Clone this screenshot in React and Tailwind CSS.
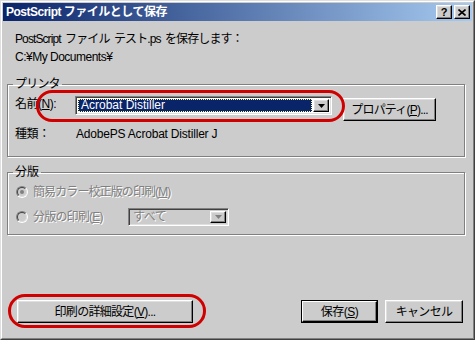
import React from "react";

const font = { fontFamily: '"Liberation Sans", "Noto Sans CJK JP", sans-serif' };

const raised =
  "border border-t-white border-l-white border-r-black border-b-black shadow-[inset_-1px_-1px_0_#808080,inset_1px_1px_0_#dfdfdf] bg-[#cccccc]";
const sunken =
  "border border-t-[#808080] border-l-[#808080] border-r-white border-b-white shadow-[inset_1px_1px_0_#404040,inset_-1px_-1px_0_#dfdfdf]";

function Arrow({ color = "#000" }) {
  return (
    <svg width="7" height="4" viewBox="0 0 7 4">
      <path d="M0 0h7L3.5 4z" fill={color} />
    </svg>
  );
}

function DropBtn({ disabled }) {
  return (
    <div className={`w-[16px] h-full flex items-center justify-center ${raised}`}>
      <Arrow color={disabled ? "#808080" : "#000"} />
    </div>
  );
}

function Radio({ checked }) {
  return (
    <div className="w-[12px] h-[12px] rounded-full border border-t-[#808080] border-l-[#808080] border-r-white border-b-white bg-[#cccccc] flex items-center justify-center shrink-0">
      <div className="w-[10px] h-[10px] rounded-full border border-t-[#404040] border-l-[#404040] border-r-[#dfdfdf] border-b-[#dfdfdf] flex items-center justify-center">
        {checked && <div className="w-[4px] h-[4px] rounded-full bg-[#808080]" />}
      </div>
    </div>
  );
}

const dis = "text-[#808080] [text-shadow:1px_1px_0_#fff]";

export default function App() {
  return (
    <div
      className="relative w-[475px] h-[340px] bg-[#cccccc] border border-t-[#dfdfdf] border-l-[#dfdfdf] border-r-[#404040] border-b-[#404040] text-[12px] leading-[14px] text-black"
      style={font}
    >
      <div className="h-full border border-t-white border-l-white border-r-[#808080] border-b-[#808080] p-[1px] flex flex-col">
        {/* title bar */}
        <div className="h-[18px] flex items-center bg-[linear-gradient(to_right,#0a246a,#a6caf0)] pl-[3px] pr-[2px]">
          <div className="flex-1 text-white font-bold text-[12px] tracking-[-0.5px]">
            PostScript ファイルとして保存
          </div>
          <div className={`w-[16px] h-[14px] flex items-center justify-center font-bold text-[11px] leading-none ${raised}`}>?</div>
          <div className={`ml-[2px] w-[16px] h-[14px] flex items-center justify-center ${raised}`}>
            <svg width="8" height="7" viewBox="0 0 8 7">
              <path d="M0.5 0.5l7 6M7.5 0.5l-7 6" stroke="#000" strokeWidth="1.6" />
            </svg>
          </div>
        </div>

        {/* content */}
        <div className="flex flex-col px-[4px]">
          <div className="ml-[8px] mt-[11px] tracking-[-0.9px] [word-spacing:2px]">PostScript ファイル テスト.ps を保存します：</div>
          <div className="ml-[8px] mt-[4px] tracking-[-0.5px]">C:¥My Documents¥</div>

          <fieldset className="mt-[13px] w-[458px] border border-[#808080] shadow-[inset_1px_1px_0_#fff,1px_1px_0_#fff] pb-[15px]">
            <legend className="ml-[5px] px-[2px] tracking-[-0.8px]">プリンタ</legend>
            <div className="flex items-start mt-[5px] pl-[7px]">
              <div className="w-[60px] mt-[1px] tracking-[-0.5px]">
                名前(<span className="underline">N</span>):
              </div>
              <div className={`w-[257px] h-[19px] flex bg-white p-[2px] ${sunken}`}>
                <div className="flex-1 bg-[#0a246a] outline-1 outline-dotted outline-[#ffff99] -outline-offset-1 text-white pl-[3px] leading-[13px] mr-[1px]">
                  Acrobat Distiller
                </div>
                <DropBtn />
              </div>
              <div className={`ml-[11px] mt-[2px] w-[93px] h-[23px] flex items-center justify-center tracking-[-0.8px] ${raised}`}>
                プロパティ(<span className="underline">P</span>)...
              </div>
            </div>
            <div className="flex mt-[6px] pl-[7px]">
              <div className="w-[61px] tracking-[-0.4px]">種類：</div>
              <div className="tracking-[-0.2px]">AdobePS Acrobat Distiller J</div>
            </div>
          </fieldset>

          <fieldset className="mt-[8px] w-[458px] border border-[#808080] shadow-[inset_1px_1px_0_#fff,1px_1px_0_#fff] pb-[8px]">
            <legend className="ml-[5px] px-[2px]">分版</legend>
            <div className="flex items-center mt-[6px] pl-[8px] h-[14px]">
              <Radio checked />
              <div className={`ml-[5px] tracking-[-0.9px] ${dis}`}>
                簡易カラー校正版の印刷(<span className="underline">M</span>)
              </div>
            </div>
            <div className="flex items-center mt-[9px] pl-[8px] h-[18px]">
              <Radio />
              <div className={`ml-[5px] w-[95px] tracking-[-0.8px] ${dis}`}>
                分版の印刷(<span className="underline">E</span>)
              </div>
              <div className={`w-[101px] h-[18px] flex bg-[#cccccc] p-[2px] ${sunken}`}>
                <div className={`flex-1 pl-[2px] leading-[12px] tracking-[-0.5px] ${dis}`}>すべて</div>
                <DropBtn disabled />
              </div>
            </div>
          </fieldset>

          <div className="flex items-start mt-[65px]">
            <div className={`ml-[10px] w-[176px] h-[23px] flex items-center justify-center tracking-[-0.7px] ${raised}`}>
              印刷の詳細設定(<span className="underline">V</span>)...
            </div>
            <div className="flex-1" />
            <div className="w-[77px] h-[23px] border border-black">
              <div className="w-full h-full flex items-center justify-center border border-t-white border-l-white border-r-black border-b-black shadow-[inset_-1px_-1px_0_#808080] tracking-[-0.5px]">
                保存(<span className="underline">S</span>)
              </div>
            </div>
            <div className={`ml-[7px] mr-[5px] w-[78px] h-[23px] flex items-center justify-center tracking-[-0.7px] ${raised}`}>
              キャンセル
            </div>
          </div>
        </div>
      </div>

      {/* red highlight rings */}
      <div className="absolute left-[35px] top-[89px] w-[309px] h-[32px] border-[3px] border-[#d00000] rounded-full pointer-events-none" />
      <div className="absolute left-[7px] top-[293px] w-[198px] h-[34px] border-[3px] border-[#d00000] rounded-full pointer-events-none" />
    </div>
  );
}
